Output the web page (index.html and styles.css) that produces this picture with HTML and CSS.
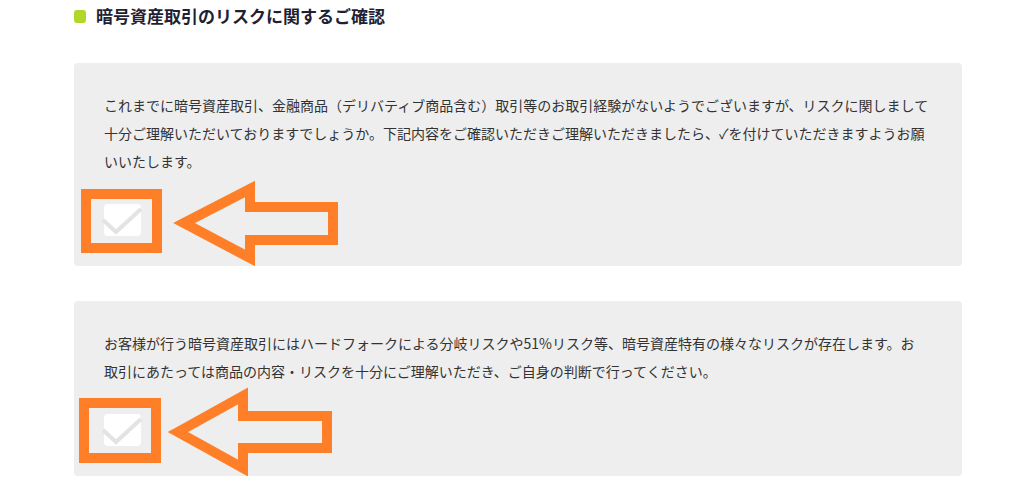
FILE: index.html
```html
<!DOCTYPE html>
<html lang="ja">
  <head>
    <meta charset="UTF-8" />
    <meta name="viewport" content="width=device-width, initial-scale=1.0" />
    <title>暗号資産取引のリスクに関するご確認</title>
    <link rel="stylesheet" href="styles.css">
  </head>
  <body>
    <div class="wrap">
      <h2 class="title"><span class="dot"></span>暗号資産取引のリスクに関するご確認</h2>

      <div class="panel">
        <p>これまでに暗号資産取引、金融商品（デリバティブ商品含む）取引等のお取引経験がないようでございますが、リスクに関しまして十分ご理解いただいておりますでしょうか。下記内容をご確認いただきご理解いただきましたら、✓を付けていただきますようお願いいたします。</p>
        <label class="check">
          <svg width="37" height="32" viewBox="0 0 37 32">
            <path d="M-1 16 L12 28 L37 5" />
          </svg>
        </label>
        <svg class="mark" width="888" height="204" viewBox="0 0 888 204">
          <rect x="12" y="131" width="71" height="54" />
          <polygon points="110,160 176,126 176,144 259,144 259,177 176,177 176,195" />
        </svg>
      </div>

      <div class="panel">
        <p>お客様が行う暗号資産取引にはハードフォークによる分岐リスクや51%リスク等、暗号資産特有の様々なリスクが存在します。お<br>取引にあたっては商品の内容・リスクを十分にご理解いただき、ご自身の判断で行ってください。</p>
        <label class="check">
          <svg width="37" height="32" viewBox="0 0 37 32">
            <path d="M-1 16 L12 28 L37 5" />
          </svg>
        </label>
        <svg class="mark" width="888" height="175" viewBox="0 0 888 175">
          <rect x="10" y="102" width="72" height="55" />
          <polygon points="104,131 169,95 169,115 253,115 253,147 169,147 169,167" />
        </svg>
      </div>
    </div>
  </body>
</html>
```

FILE: styles.css
```css
* {
  box-sizing: border-box;
  padding: 0;
  margin: 0;
}
body {
  font-family: "Noto Sans CJK JP", "Noto Sans", sans-serif;
  font-size: 14px;
  color: #333;
  background-color: white;
  overflow: hidden;
}
.wrap {
  width: 888px;
  margin-left: 74px;
  padding-top: 4px;
  display: flex;
  flex-direction: column;
  gap: 35px;
}
.title {
  display: flex;
  align-items: center;
  gap: 10px;
  font-size: 17px;
  font-weight: bold;
  line-height: 24px;
  color: #1f1f35;
}
.dot {
  width: 12px;
  height: 13px;
  border-radius: 3px;
  background-color: #b3d628;
}
.panel {
  position: relative;
  background-color: #eeeeee;
  border-radius: 4px;
  padding: 28px 30px 30px 30px;
}
.panel p {
  line-height: 28px;
}
.check {
  display: block;
  width: 37px;
  height: 32px;
  margin-top: 29px;
  background-color: #ffffff;
  border-radius: 4px;
}
.check svg {
  display: block;
  overflow: visible;
}
.check path {
  fill: none;
  stroke: #e3e3e3;
  stroke-width: 4;
}
.mark {
  position: absolute;
  left: 0;
  top: 0;
  overflow: visible;
  pointer-events: none;
}
.mark rect,
.mark polygon {
  fill: none;
  stroke: #fe7f27;
  stroke-width: 10;
}
```
